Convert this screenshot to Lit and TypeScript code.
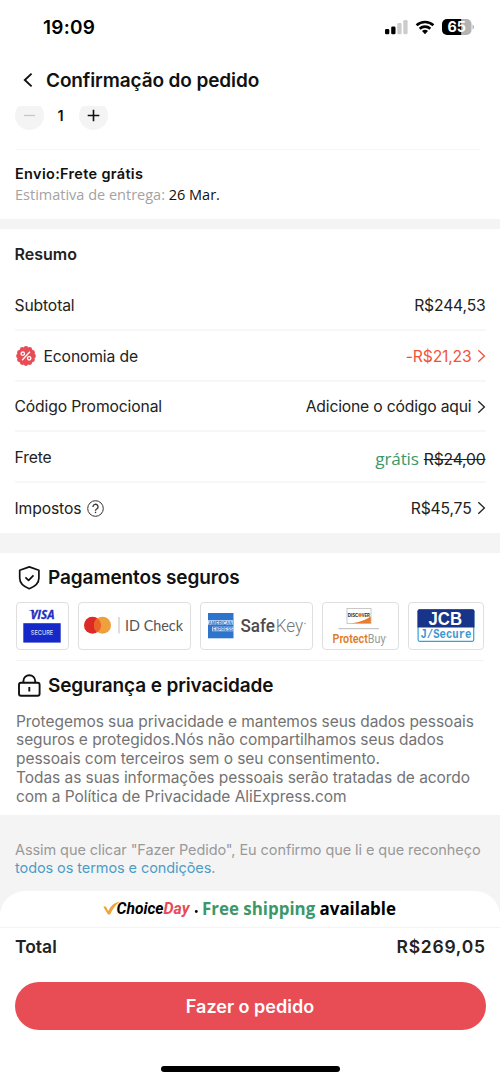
import { LitElement, html, css, svg, nothing } from "lit";
import { customElement, property } from "lit/decorators.js";

@customElement("status-bar")
class StatusBar extends LitElement {
  static styles = css`
    :host { display: flex; height: 55px; justify-content: space-between; box-sizing: border-box; padding: 0 25px 0 43px; color: #000; }
    .time { font-size: 19px; font-weight: 600; line-height: 55px; letter-spacing: 0.25px; }
    svg { display: block; margin-top: 18px; }
    .level { font: 700 14.500px "Inter", sans-serif; fill: #fff; }
  `;
  render() {
    return html`
      <span class="time">19:09</span>
      <svg width="90" height="18" viewBox="385 18 90 18">
        <rect x="385" y="29" width="4.3" height="5.2" rx="1.3" fill="#000" />
        <rect x="391.2" y="26.5" width="4.3" height="7.7" rx="1.3" fill="#000" />
        <rect x="397.3" y="23" width="4.3" height="11.2" rx="1.3" fill="#ccc" />
        <rect x="403.3" y="20" width="4.3" height="14.2" rx="1.3" fill="#ccc" />
        <g fill="none" stroke="#000" stroke-width="2.6">
          <path d="M416.6 25.3a12.2 12.2 0 0 1 16.8 0" />
          <path d="M419.7 28.7a7.7 7.7 0 0 1 10.6 0" />
        </g>
        <path d="M425 34.2l-3-3.1a4.3 4.3 0 0 1 6 0z" fill="#000" />
        <path d="M447 19h14.5v16H447a5 5 0 0 1-5-5v-6a5 5 0 0 1 5-5z" fill="#000" />
        <path d="M461.500 19h5a5 5 0 0 1 5 5v6a5 5 0 0 1-5 5h-5z" fill="#b3b3b3" />
        <path d="M472.500 24.500a2.800 2.800 0 0 1 0 5z" fill="#b3b3b3" />
        <text class="level" x="456.700" y="32.400" text-anchor="middle" textLength="18.500" lengthAdjust="spacingAndGlyphs">65</text>
      </svg>
    `;
  }
}

@customElement("summary-row")
class SummaryRow extends LitElement {
  @property() label = "";
  @property() value = "";
  @property({ type: Boolean }) arrow = false;
  @property({ type: Boolean }) accent = false;
  static styles = css`
    :host { display: flex; height: 50.75px; box-sizing: border-box; align-items: center; padding-top: 2px; border-bottom: 2px solid #f7f7f7; color: #222; font-size: 15.700px; }
    :host(:last-of-type) { border-bottom-color: transparent; }
    .label { display: flex; align-items: center; letter-spacing: -0.14px; }
    .value { display: flex; align-items: center; margin-left: auto; letter-spacing: -0.18px; }
    .accent { color: #f1533a; }
    .chevron { display: block; margin-left: 5px; }
  `;
  render() {
    return html`
      <span class="label"><slot name="before"></slot>${this.label}<slot name="after"></slot></span>
      <span class="value ${this.accent ? "accent" : ""}">
        <slot name="value">${this.value}</slot>
        ${this.arrow
          ? html`<svg class="chevron" width="9" height="14" viewBox="0 0 9 14"><path d="M1.300 1.300L7.400 7l-6.100 5.700" fill="none" stroke="currentColor" stroke-width="1.300" /></svg>`
          : nothing}
      </span>
    `;
  }
}

@customElement("payment-badges")
class PaymentBadges extends LitElement {
  static styles = css`
    :host { display: flex; justify-content: space-between; }
    .badge { box-sizing: border-box; height: 48px; border: 1px solid #dfdfdf; border-radius: 4px; background: #fff; }
    svg { display: block; }
    text { font-family: "Inter", sans-serif; }
    .roboto { font-family: Roboto, sans-serif; }
    .open { font-family: "Open Sans", sans-serif; }
    .lato { font-family: Lato, sans-serif; }
    .mono { font-family: "Liberation Mono", monospace; }
    .arial { font-family: "Liberation Sans", sans-serif; }
  `;
  private badge(x: number, width: number, art: unknown) {
    return html`<div class="badge"><svg width=${width - 2} height="46" viewBox="${x + 1} 603 ${width - 2} 46">${art}</svg></div>`;
  }
  render() {
    return html`
      ${this.badge(16, 53, svg`
        <path d="M28.500 610h5l1.700 5-3-3.700z" fill="#1d32c4" />
        <text class="open" x="30.500" y="618.700" font-size="12.500" font-weight="700" font-style="italic" fill="#1d32c4" stroke="#1d32c4" stroke-width=".3" textLength="24" lengthAdjust="spacingAndGlyphs">VISA</text>
        <rect x="23.300" y="623.200" width="37.400" height="19.400" fill="#1728c8" />
        <text x="42" y="635" font-size="6.500" font-weight="500" fill="#d9dcf8" text-anchor="middle" textLength="22.500" lengthAdjust="spacingAndGlyphs">SECURE</text>
      `)}
      ${this.badge(78, 113, svg`
        <circle cx="92.500" cy="625.300" r="8.500" fill="#dc2a26" />
        <circle cx="102.500" cy="625.300" r="8.500" fill="#eda03b" />
        <path d="M97.500 618.400a8.500 8.500 0 0 1 0 13.800a8.500 8.500 0 0 1 0-13.800z" fill="#ec6227" />
        <path d="M119 617v16.500" stroke="#bbb" stroke-width="1" />
        <text class="lato" x="125" y="631" font-size="15.500" fill="#555" textLength="58" lengthAdjust="spacingAndGlyphs">ID Check</text>
      `)}
      ${this.badge(200, 113, svg`
        <rect x="208" y="613" width="25.500" height="25.300" fill="#2d75cc" />
        <path d="M208 620.200h25v4.600h-25zM212 626.700h21.500v4.600H212z" fill="#d5e4f6" />
        <text class="arial" x="208.500" y="624.500" font-size="5.500" font-weight="700" fill="#2d75cc" textLength="24" lengthAdjust="spacingAndGlyphs">AMERICAN</text>
        <text class="arial" x="212.500" y="631" font-size="5.500" font-weight="700" fill="#2d75cc" textLength="20.500" lengthAdjust="spacingAndGlyphs">EXPRESS</text>
        <text class="roboto" x="240.500" y="632" font-size="18" font-weight="500" fill="#4c4c50" textLength="34.500" lengthAdjust="spacingAndGlyphs">Safe</text>
        <text class="roboto" x="275.700" y="632" font-size="18" font-weight="300" fill="#777" textLength="27.500" lengthAdjust="spacingAndGlyphs">Key</text>
        <circle cx="305" cy="623.500" r=".8" fill="#999" />
      `)}
      ${this.badge(322, 76.500, svg`
        <rect x="347" y="608.500" width="24" height="15" fill="#fff" stroke="#bbb" stroke-width=".8" />
        <path d="M352 623.300q11-1.500 18.800-6.800v6.800z" fill="#e67d31" />
        <text class="arial" x="347.800" y="616.800" font-size="5.200" font-weight="700" fill="#222" textLength="10.500" lengthAdjust="spacingAndGlyphs">DISC</text>
        <circle cx="360" cy="615" r="1.900" fill="#e67d31" />
        <text class="arial" x="361.800" y="616.800" font-size="5.200" font-weight="700" fill="#222" textLength="8" lengthAdjust="spacingAndGlyphs">VER</text>
        <path d="M338.500 628.700h40.500" stroke="#bbb" stroke-width="1" />
        <text class="roboto" x="332.500" y="642.600" font-size="12" font-weight="600" fill="#de7d28" textLength="53" lengthAdjust="spacingAndGlyphs">Protect<tspan font-weight="400" fill="#999">Buy</tspan></text>
        <circle cx="386.200" cy="637" r=".6" fill="#aaa" />
      `)}
      ${this.badge(407.500, 76.500, svg`
        <rect x="417.600" y="609.800" width="55.600" height="31.500" rx="1.500" fill="#fff" stroke="#35a0da" stroke-width="1.200" />
        <path d="M419 609.200h53a2 2 0 0 1 2 2v16.300h-57v-16.300a2 2 0 0 1 2-2z" fill="#173489" />
        <text class="arial" x="428" y="625" font-size="18" font-weight="700" fill="#fff" textLength="33.500" lengthAdjust="spacingAndGlyphs">JCB</text>
        <text class="mono" x="420" y="638" font-size="12.500" font-weight="700" fill="#3b97cf" textLength="51" lengthAdjust="spacingAndGlyphs">J/Secure</text>
      `)}
    `;
  }
}

@customElement("app-root")
class AppRoot extends LitElement {
  static styles = css`
    :host { display: flex; flex-direction: column; height: 1082px; overflow: hidden; background: #fff; font-family: "Inter", sans-serif; color: #111; }
    svg { display: block; }
    .header { display: flex; align-items: center; height: 51px; padding: 0 22px 2px; flex: none; box-sizing: border-box; }
    .header h1 { margin: 1px 0 0 13px; font-size: 19px; font-weight: 600; letter-spacing: -0.11px; }
    .item { height: 43px; margin: 0 20px 0 15px; overflow: hidden; border-bottom: 1.500px solid #f7f7f7; flex: none; }
    .stepper { display: flex; align-items: center; margin-top: -5px; }
    .round { display: grid; place-items: center; width: 28.500px; height: 29px; border-radius: 50%; background: #f4f4f4; }
    .count { width: 34px; text-align: center; font-size: 14.500px; font-weight: 600; padding-right: 1.500px; }
    .shipping { height: 69px; padding: 13px 15px 0; box-sizing: border-box; flex: none; border-bottom: 0; }
    .ship-title { font-size: 14.500px; font-weight: 600; line-height: 21px; letter-spacing: 0.32px; }
    .ship-date { font: 14.500px/22px "Open Sans", sans-serif; color: #a3a3a3; }
    .ship-date b { font-weight: 400; color: #111; }
    .band { height: 10px; background: #f4f4f4; flex: none; }
    .summary { height: 304px; padding: 0 14.500px; flex: none; }
    .summary h2 { margin: 0; font-size: 16px; line-height: 51px; font-weight: 600; color: #222; }
    .percent { margin-right: 7px; }
    .help { margin-left: 6px; }
    .free { display: flex; gap: 5px; align-items: center; padding-top: 3px; }
    .free i { font: 17.200px/22px "Open Sans", sans-serif; color: #3c9869; }
    .band.tall { height: 20px; }
    .secure { height: 262px; padding: 0 16px; box-sizing: border-box; flex: none; }
    .secure h2 { display: flex; align-items: center; gap: 7px; height: 49px; margin: 0; padding-left: 1px; font-size: 19px; font-weight: 600; letter-spacing: -0.1px; box-sizing: border-box; }
    .secure h2.privacy { border-top: 1.500px solid #f4f4f4; margin-top: 10px; height: 50px; letter-spacing: -0.13px; }
    .privacy-text { margin: 2.500px 0 0; font-size: 15.500px; line-height: 18.750px; letter-spacing: -0.055px; color: #737373; white-space: nowrap; }
    .terms { height: 76px; padding: 26px 15px 0; box-sizing: border-box; background: #f4f4f4; font-size: 14.500px; line-height: 17.500px; letter-spacing: -0.08px; color: #999; white-space: nowrap; flex: none; }
    .terms a { color: #4c9cc7; }
    .footer-wrap { background: #f4f4f4; flex: none; }
    .promo { display: flex; align-items: center; justify-content: center; height: 37px; box-sizing: border-box; padding-right: 1px; background: #fff; border-radius: 25px 25px 0 0; border-bottom: 1.500px solid #f4f4f4; }
    .promo-text { font: 700 16.900px/24px "Open Sans", sans-serif; color: #000; }
    .promo-text em { font-style: normal; color: #3c9869; }
    .logo { font: italic 700 16px Roboto, sans-serif; }
    .total { display: flex; justify-content: space-between; padding: 0 15px; height: 54px; line-height: 37px; font-size: 17.500px; font-weight: 600; color: #222; flex: none; box-sizing: border-box; }
    .amount { letter-spacing: 0.75px; margin-right: -0.75px; }
    .pay { display: grid; place-items: center; margin: 0 14.500px; height: 48px; border: 0; border-radius: 24px; background: #e84c55; color: #fff; font: 600 18px "Inter", sans-serif; flex: none; }
    .home { width: 179px; height: 6px; margin: 36px auto 0; border-radius: 3px; background: #000; flex: none; }
  `;
  render() {
    const burst = Array.from({ length: 12 }, (_, i) => {
      const a = (i * Math.PI) / 6;
      return svg`<circle cx=${10 + 7.600 * Math.sin(a)} cy=${10 - 7.600 * Math.cos(a)} r="2.300" />`;
    });
    return html`
      <status-bar></status-bar>
      <header class="header">
        <svg width="11" height="16" viewBox="0 0 11 16"><path d="M9.600 1.600L2.800 8l6.800 6.400" fill="none" stroke="#111" stroke-width="1.900" /></svg>
        <h1>Confirmação do pedido</h1>
      </header>
      <div class="item">
        <div class="stepper">
          <span class="round"><svg width="13" height="13"><path d="M1 6.500h11" stroke="#c8c8c8" stroke-width="1.300" /></svg></span>
          <span class="count">1</span>
          <span class="round"><svg width="13" height="13"><path d="M.7 6.500h11.600M6.500.7v11.600" stroke="#111" stroke-width="1.600" /></svg></span>
        </div>
      </div>
      <section class="shipping">
        <div class="ship-title">Envio:Frete grátis</div>
        <div class="ship-date">Estimativa de entrega: <b>26 Mar.</b></div>
      </section>
      <div class="band"></div>
      <section class="summary">
        <h2>Resumo</h2>
        <summary-row label="Subtotal" value="R$244,53"></summary-row>
        <summary-row label="Economia de" value="-R$21,23" arrow accent>
          <svg class="percent" slot="before" width="22" height="22" viewBox="-1 -1 22 22">
            <g fill="#e84c55"><circle cx="10" cy="10" r="8.800" />${burst}</g>
            <g fill="none" stroke="#fff" stroke-width="1.300"><circle cx="6.800" cy="7.700" r="1.700" /><circle cx="13.200" cy="12.300" r="1.700" /><path d="M13.900 5.800L6.100 14.200" /></g>
          </svg>
        </summary-row>
        <summary-row label="Código Promocional" value="Adicione o código aqui" arrow></summary-row>
        <summary-row label="Frete"><span slot="value" class="free"><i>grátis</i><s>R$24,00</s></span></summary-row>
        <summary-row label="Impostos" value="R$45,75" arrow>
          <svg class="help" slot="after" width="17" height="17" viewBox="0 0 17 17" fill="none" stroke="#333">
            <circle cx="8.500" cy="8.500" r="7.800" stroke-width="1" />
            <path d="M6 7a2.500 2.500 0 1 1 3.700 2c-.9.5-1.200.8-1.200 1.700" stroke-width="1.300" /><path d="M8.500 11.700v1.400" stroke-width="1.400" />
          </svg>
        </summary-row>
      </section>
      <div class="band tall"></div>
      <section class="secure">
        <h2>
          <svg width="24" height="24" viewBox="0 0.500 24 24" fill="none" stroke="#111" stroke-width="1.700" stroke-linejoin="round">
            <path d="M12.300 1.400L21.900 4.800V12.500C21.900 18 17.600 21.200 12.300 23.200 7 21.200 2.700 18 2.700 12.500V4.800z" />
            <path d="M8.400 11.900l3.200 3 4.900-5" />
          </svg>
          Pagamentos seguros
        </h2>
        <payment-badges></payment-badges>
        <h2 class="privacy">
          <svg width="24" height="24" viewBox="0 0.500 24 24" fill="none" stroke="#111" stroke-width="1.900">
            <rect x="2" y="9.200" width="20.600" height="13" rx="2" /><path d="M6.400 9V7.600a5.900 5.900 0 0 1 11.800 0V9M12.300 13.500v4.500" />
          </svg>
          Segurança e privacidade
        </h2>
        <p class="privacy-text">Protegemos sua privacidade e mantemos seus dados pessoais<br />seguros e protegidos.Nós não compartilhamos seus dados<br />pessoais com terceiros sem o seu consentimento.<br />Todas as suas informações pessoais serão tratadas de acordo<br />com a Política de Privacidade AliExpress.com</p>
      </section>
      <section class="terms">Assim que clicar "Fazer Pedido", Eu confirmo que li e que reconheço<br /><a>todos os termos e condições</a>.</section>
      <div class="footer-wrap">
        <div class="promo">
          <svg width="99" height="24" viewBox="0 0 99 24">
            <path d="M.3 9.800q2.300-1.800 3.600 1.400l1.200 2.700Q9.500 5.500 17 4.500 11 9 7.500 16.700q-1.400 1.800-3 0z" fill="#efa43b" />
            <text class="logo" x="13.500" y="17.300" fill="#000" textLength="47" lengthAdjust="spacingAndGlyphs">Choice</text>
            <text class="logo" x="60.500" y="17.300" fill="#e84c55" textLength="26" lengthAdjust="spacingAndGlyphs">Day</text>
            <circle cx="93.300" cy="14.500" r="1.400" fill="#000" />
          </svg>
          <span class="promo-text"><em>Free shipping</em> available</span>
        </div>
      </div>
      <div class="total"><span>Total</span><span class="amount">R$269,05</span></div>
      <button class="pay">Fazer o pedido</button>
      <div class="home"></div>
    `;
  }
}
